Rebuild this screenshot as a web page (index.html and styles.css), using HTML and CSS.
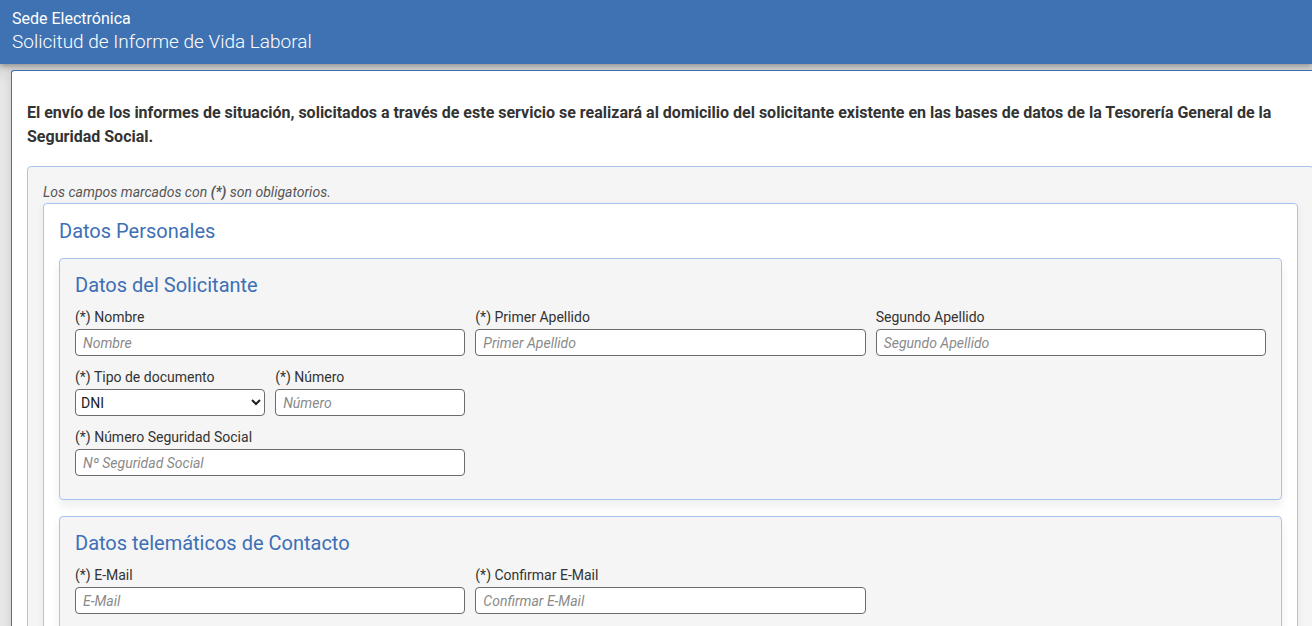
FILE: index.html
```html
<!DOCTYPE html>
<html lang="es">
<head>
    <meta charset="UTF-8">
    <meta name="viewport" content="width=device-width, initial-scale=1.0">
    <title>Solicitud de Informe de Vida Laboral</title>
    <link rel="stylesheet" href="styles.css">
</head>
<body>
    <header class="topbar">
        <div class="site-name">Sede Electrónica</div>
        <div class="page-title">Solicitud de Informe de Vida Laboral</div>
    </header>

    <main class="page">
        <div class="card">
            <p class="intro">El envío de los informes de situación, solicitados a través de este servicio se realizará al domicilio del solicitante existente en las bases de datos de la Tesorería General de la Seguridad Social.</p>

            <div class="form-box">
                <p class="note">Los campos marcados con <b>(*)</b> son obligatorios.</p>

                <section class="panel">
                    <h2 class="panel-title">Datos Personales</h2>

                    <div class="subpanel">
                        <h3 class="panel-title">Datos del Solicitante</h3>
                        <div class="fields">
                            <div class="field span-2">
                                <label for="nombre">(*) Nombre</label>
                                <input id="nombre" type="text" placeholder="Nombre">
                            </div>
                            <div class="field span-2">
                                <label for="ape1">(*) Primer Apellido</label>
                                <input id="ape1" type="text" placeholder="Primer Apellido">
                            </div>
                            <div class="field span-2">
                                <label for="ape2">Segundo Apellido</label>
                                <input id="ape2" type="text" placeholder="Segundo Apellido">
                            </div>

                            <div class="field new-row">
                                <label for="tipo">(*) Tipo de documento</label>
                                <select id="tipo">
                                    <option>DNI</option>
                                    <option>NIE</option>
                                    <option>Pasaporte</option>
                                </select>
                            </div>
                            <div class="field">
                                <label for="numero">(*) Número</label>
                                <input id="numero" type="text" placeholder="Número">
                            </div>

                            <div class="field wide-row">
                                <label for="nss">(*) Número Seguridad Social</label>
                                <input id="nss" type="text" placeholder="Nº Seguridad Social">
                            </div>
                        </div>
                    </div>

                    <div class="subpanel">
                        <h3 class="panel-title">Datos telemáticos de Contacto</h3>
                        <div class="fields">
                            <div class="field span-2">
                                <label for="email">(*) E-Mail</label>
                                <input id="email" type="email" placeholder="E-Mail">
                            </div>
                            <div class="field span-2">
                                <label for="email2">(*) Confirmar E-Mail</label>
                                <input id="email2" type="email" placeholder="Confirmar E-Mail">
                            </div>
                        </div>
                    </div>
                </section>
            </div>
        </div>
    </main>
</body>
</html>
```

FILE: styles.css
```css
body {
    margin: 0;
    font-family: Roboto, "Liberation Sans", Arial, sans-serif;
    background-color: #e7e7e7;
    color: #333;
    overflow-x: hidden;
}
.topbar {
    position: relative;
    z-index: 2;
    height: 64px;
    box-sizing: border-box;
    padding: 9px 12px 0;
    background-color: #3f72b2;
    color: white;
    box-shadow: 0 2px 6px rgba(0, 0, 0, 0.35);
}
.site-name { font-size: 16px; line-height: 20px; }
.page-title { font-size: 19px; line-height: 26px; font-weight: 300; }

.page {
    padding: 6px 0 0 11px;
    background: linear-gradient(#d6d6d6, #e7e7e7 20px);
}
.card {
    margin-right: -17px;
    padding: 30px 15px 0;
    background-color: white;
    border-top: 1px solid #3f72b2;
    border-left: 1px solid #3f72b2;
    border-top-left-radius: 3px;
    box-shadow: 0 2px 10px rgba(0, 0, 0, 0.12);
}
.intro {
    margin: 0 0 17px;
    font-size: 16px;
    line-height: 24px;
    font-weight: bold;
    color: #333;
}
.form-box {
    padding: 16px 15px 20px;
    background-color: #f5f5f5;
    border: 1px solid #a9c4e8;
    border-radius: 4px;
}
.note {
    margin: 0 0 2px;
    font-size: 14px;
    line-height: 18px;
    font-style: italic;
    color: #555;
}
.panel {
    padding: 16px 15px 15px;
    background-color: white;
    border: 1px solid #a9c4e8;
    border-radius: 4px;
    box-shadow: 0 2px 10px rgba(0, 0, 0, 0.06);
}
.panel-title {
    margin: 0 0 16px;
    font-size: 20px;
    line-height: 22px;
    font-weight: normal;
    color: #3d6fb5;
}
.subpanel .panel-title { margin-bottom: 11px; }
.subpanel {
    padding: 15px 15px 12px;
    background-color: #f5f5f5;
    border: 1px solid #a9c4e8;
    border-radius: 4px;
    box-shadow: 0 6px 10px rgba(0, 0, 0, 0.07);
}
.subpanel + .subpanel { margin-top: 16px; }

.fields {
    display: grid;
    grid-template-columns: repeat(6, 1fr);
    column-gap: 10px;
}
.field { margin-bottom: 11px; }
.span-2 { grid-column: span 2; }
.new-row { grid-column-start: 1; }
.wide-row { grid-column: 1 / span 2; }
.field label {
    display: block;
    margin-bottom: 2px;
    font-size: 14px;
    line-height: 20px;
    color: #333;
}
.field input, .field select {
    display: block;
    width: 100%;
    height: 27px;
    box-sizing: border-box;
    margin: 0;
    border: 1px solid #6b6b6b;
    border-radius: 4px;
    background-color: white;
    font-family: Roboto, "Liberation Sans", Arial, sans-serif;
    font-size: 14px;
    color: #222;
}
.field input { padding: 0 7px; }
.field select { padding: 0 1px; font-weight: normal; }
.field input::placeholder {
    font-style: italic;
    color: #8a8a8a;
}
```
